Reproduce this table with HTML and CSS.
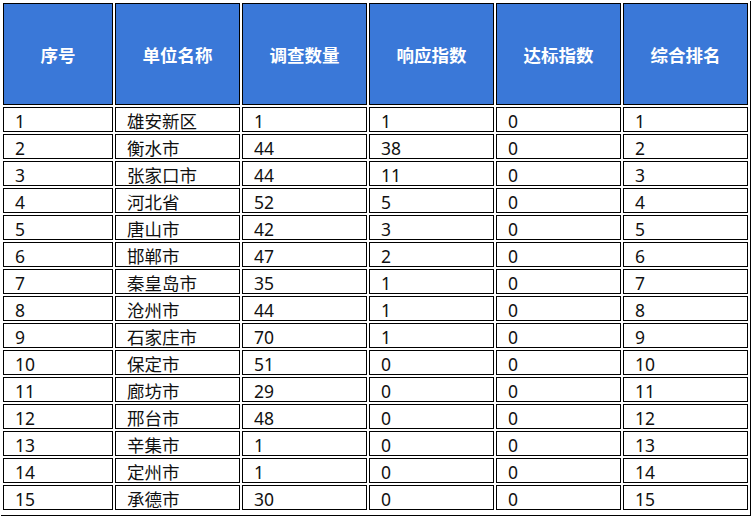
FILE: index.html
```html
<!DOCTYPE html>
<html lang="zh">
<head>
<meta charset="utf-8">
<title>排名</title>
<link rel="stylesheet" href="styles.css">
</head>
<body>
<table class="rank">
  <colgroup>
    <col class="c-first">
    <col class="c-std"><col class="c-std"><col class="c-std"><col class="c-std"><col class="c-std">
  </colgroup>
  <thead>
    <tr><th>序号</th><th>单位名称</th><th>调查数量</th><th>响应指数</th><th>达标指数</th><th>综合排名</th></tr>
  </thead>
  <tbody>
    <tr><td>1</td><td>雄安新区</td><td>1</td><td>1</td><td>0</td><td>1</td></tr>
    <tr><td>2</td><td>衡水市</td><td>44</td><td>38</td><td>0</td><td>2</td></tr>
    <tr><td>3</td><td>张家口市</td><td>44</td><td>11</td><td>0</td><td>3</td></tr>
    <tr><td>4</td><td>河北省</td><td>52</td><td>5</td><td>0</td><td>4</td></tr>
    <tr><td>5</td><td>唐山市</td><td>42</td><td>3</td><td>0</td><td>5</td></tr>
    <tr><td>6</td><td>邯郸市</td><td>47</td><td>2</td><td>0</td><td>6</td></tr>
    <tr><td>7</td><td>秦皇岛市</td><td>35</td><td>1</td><td>0</td><td>7</td></tr>
    <tr><td>8</td><td>沧州市</td><td>44</td><td>1</td><td>0</td><td>8</td></tr>
    <tr><td>9</td><td>石家庄市</td><td>70</td><td>1</td><td>0</td><td>9</td></tr>
    <tr><td>10</td><td>保定市</td><td>51</td><td>0</td><td>0</td><td>10</td></tr>
    <tr><td>11</td><td>廊坊市</td><td>29</td><td>0</td><td>0</td><td>11</td></tr>
    <tr><td>12</td><td>邢台市</td><td>48</td><td>0</td><td>0</td><td>12</td></tr>
    <tr><td>13</td><td>辛集市</td><td>1</td><td>0</td><td>0</td><td>13</td></tr>
    <tr><td>14</td><td>定州市</td><td>1</td><td>0</td><td>0</td><td>14</td></tr>
    <tr><td>15</td><td>承德市</td><td>30</td><td>0</td><td>0</td><td>15</td></tr>
  </tbody>
</table>
</body>
</html>
```
FILE: styles.css
```css
html, body {
  margin: 0;
  padding: 0;
  background: #ffffff;
}
body {
  font-family: "Noto Sans", "Noto Sans CJK SC", sans-serif;
  color: #111111;
}
.rank {
  margin: 1px 0 0 1px;
  padding-bottom: 3px;
  border-collapse: separate;
  border-spacing: 2px;
  border-right: 1px solid #000;
  border-bottom: 1px solid #000;
  table-layout: fixed;
  width: 750px;
}
.c-first { width: 110px; }
.c-std { width: 125px; }
.rank th,
.rank td {
  border: 1px solid #000;
  box-sizing: border-box;
  padding: 0;
}
.rank th {
  height: 102px;
  background: #3a78d8;
  color: #ffffff;
  font-weight: bold;
  font-size: 17.5px;
  text-align: center;
  vertical-align: middle;
}
.rank td {
  height: 25px;
  font-size: 17.5px;
  line-height: 18px;
  padding: 2px 0 0 11px;
  text-align: left;
  vertical-align: middle;
  white-space: nowrap;
  overflow: hidden;
}
```
